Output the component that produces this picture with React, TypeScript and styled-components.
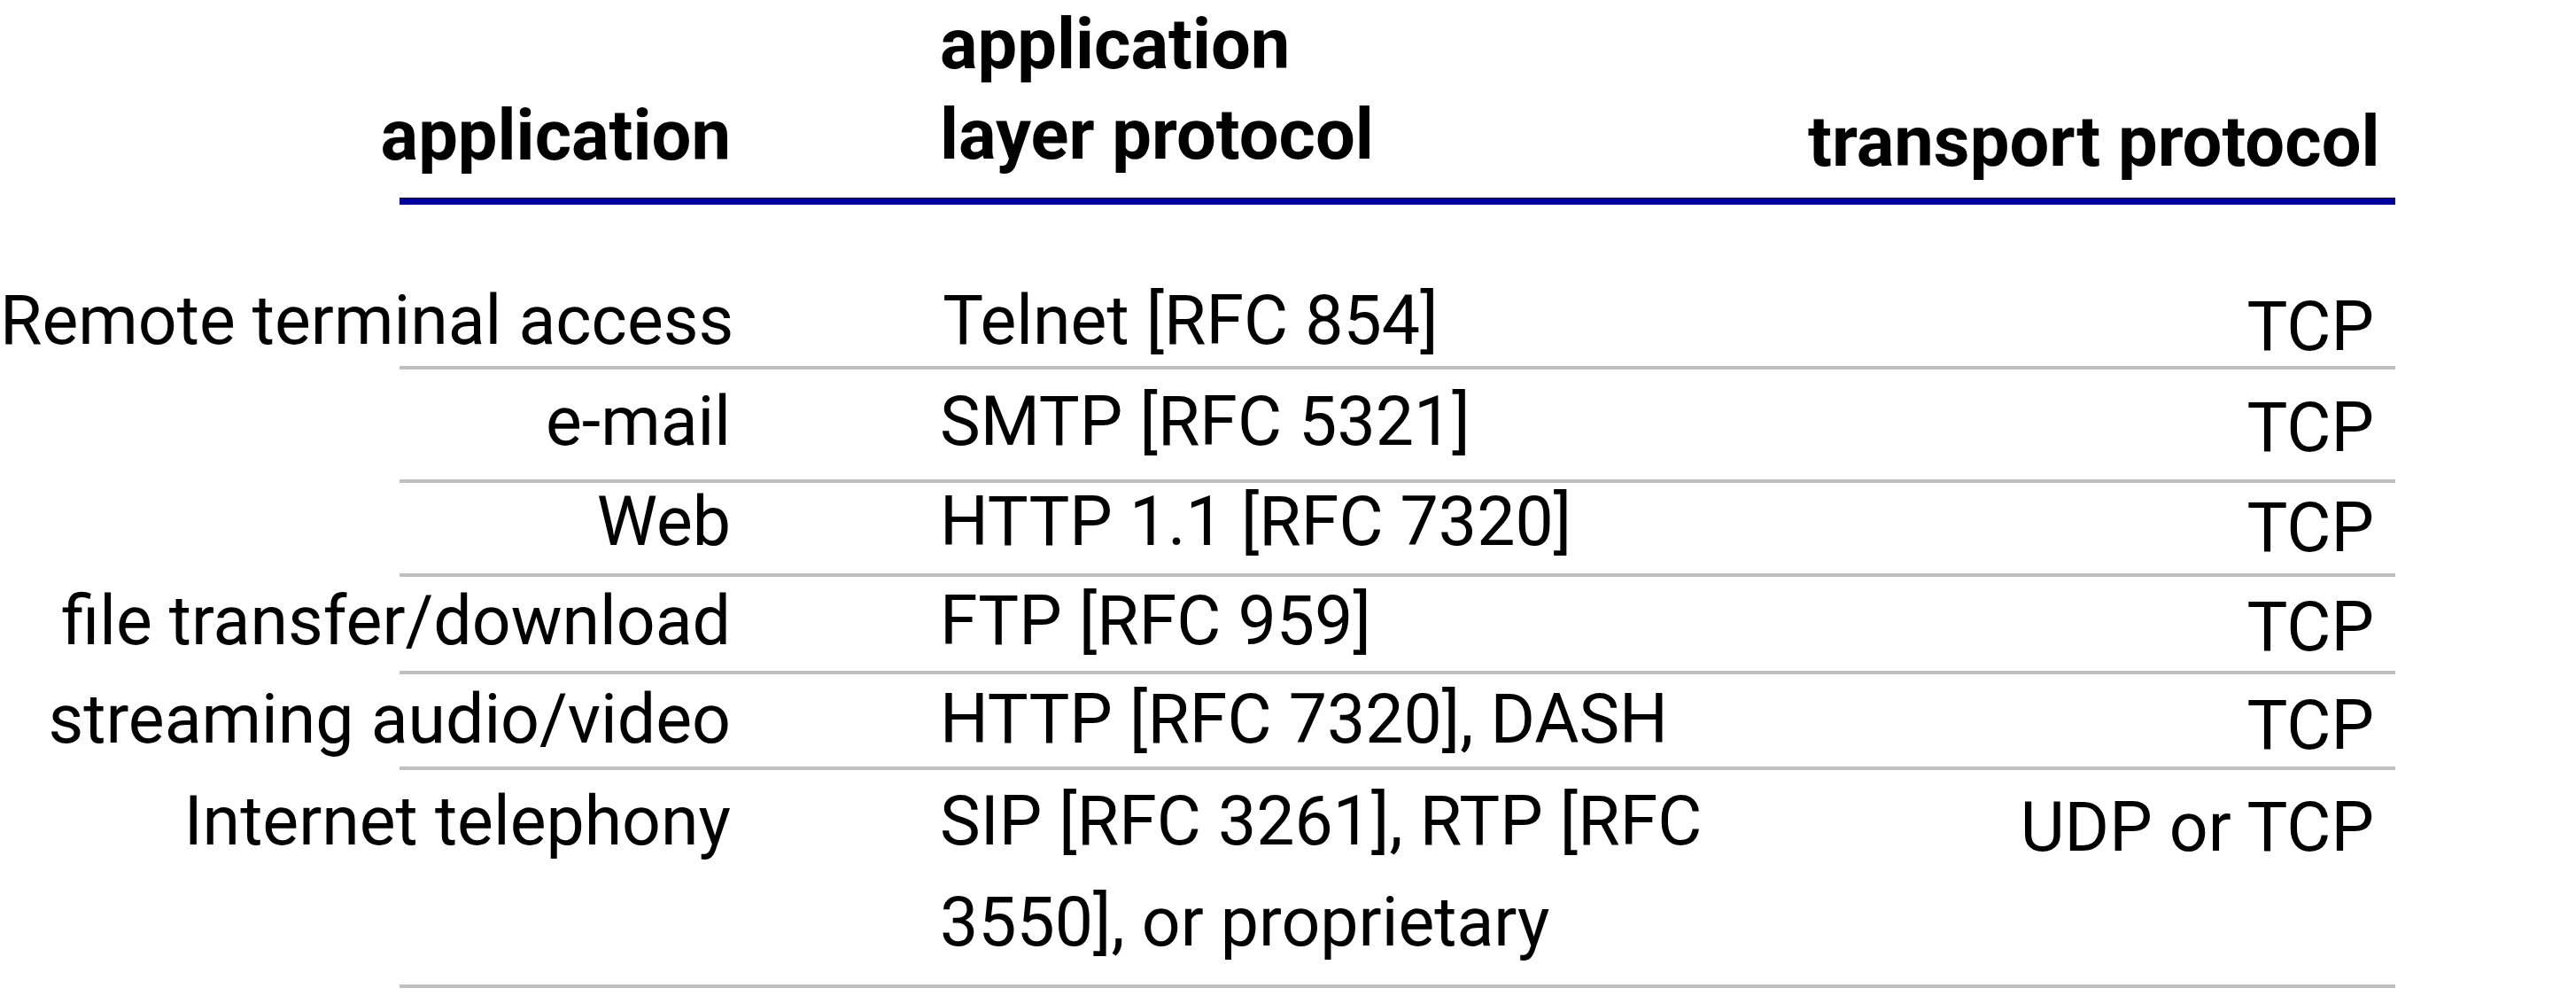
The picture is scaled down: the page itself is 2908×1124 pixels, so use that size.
import React from "react";
import styled, { createGlobalStyle } from "styled-components";

const GlobalStyle = createGlobalStyle`
  html, body {
    margin: 0;
    padding: 0;
    background: #ffffff;
  }
  body {
    font-family: Roboto, "Liberation Sans", sans-serif;
    color: #000000;
  }
`;

type Row = {
  app: string;
  proto: React.ReactNode;
  transport: string;
  height: number;
  offset: number;
};

const rows: Row[] = [
  { app: "Remote terminal access", proto: "Telnet [RFC 854]", transport: "TCP", height: 182, offset: 74 },
  { app: "e-mail", proto: "SMTP [RFC 5321]", transport: "TCP", height: 124, offset: 2 },
  { app: "Web", proto: "HTTP 1.1 [RFC 7320]", transport: "TCP", height: 102, offset: -13 },
  { app: "file transfer/download", proto: "FTP [RFC 959]", transport: "TCP", height: 106, offset: -7 },
  { app: "streaming audio/video", proto: "HTTP [RFC 7320], DASH", transport: "TCP", height: 104, offset: -6 },
  {
    app: "Internet telephony",
    proto: (
      <>
        SIP [RFC 3261], RTP [RFC
        <br />
        3550], or proprietary
      </>
    ),
    transport: "UDP or TCP",
    height: 242,
    offset: 1,
  },
];

const App = () => {
  return (
    <Page>
      <GlobalStyle />
      <Table>
        <HeadRow>
          <AppHead>application</AppHead>
          <ProtoHead>
            application
            <br />
            layer protocol
          </ProtoHead>
          <TransportHead>transport protocol</TransportHead>
        </HeadRow>
        {rows.map((r) => (
          <BodyRow key={r.app} $h={r.height}>
            <AppCell $offset={r.offset}>{r.app}</AppCell>
            <ProtoCell $offset={r.offset}>{r.proto}</ProtoCell>
            <TransportCell $offset={r.offset + 7}>{r.transport}</TransportCell>
          </BodyRow>
        ))}
      </Table>
    </Page>
  );
};

export default App;

const Page = styled.div`
  width: 2908px;
  height: 1124px;
  overflow: hidden;
  background: #ffffff;
`;

const Table = styled.div`
  margin-left: 451px;
  width: 2253px;
  display: flex;
  flex-direction: column;
`;

const HeadRow = styled.div`
  height: 223px;
  border-bottom: 8px solid #0000a0;
  display: flex;
  align-items: flex-start;
  font-size: 79.5px;
  font-weight: 700;
  line-height: 102px;
`;

const AppHead = styled.div`
  flex: 0 0 825px;
  margin-left: -451px;
  padding-top: 102px;
  text-align: right;
  white-space: nowrap;
`;

const ProtoHead = styled.div`
  flex: 0 0 980px;
  margin-left: 236px;
  margin-top: -1px;
  white-space: nowrap;
`;

const TransportHead = styled.div`
  flex: 1;
  padding-top: 109px;
  padding-right: 24px;
  text-align: right;
  white-space: nowrap;
`;

const BodyRow = styled.div<{ $h: number }>`
  height: ${(p) => p.$h}px;
  border-bottom: 4px solid #c0c0c0;
  display: flex;
  align-items: flex-start;
  font-size: 77px;
  font-weight: 400;
  line-height: 114px;
`;

const AppCell = styled.div<{ $offset: number }>`
  flex: 0 0 825px;
  margin-left: -451px;
  margin-top: ${(p) => p.$offset}px;
  text-align: right;
  white-space: nowrap;
`;

const ProtoCell = styled.div<{ $offset: number }>`
  flex: 0 0 980px;
  margin-left: 236px;
  margin-top: ${(p) => p.$offset}px;
  white-space: nowrap;
`;

const TransportCell = styled.div<{ $offset: number }>`
  flex: 1;
  margin-top: ${(p) => p.$offset}px;
  padding-right: 24px;
  text-align: right;
  white-space: nowrap;
`;
